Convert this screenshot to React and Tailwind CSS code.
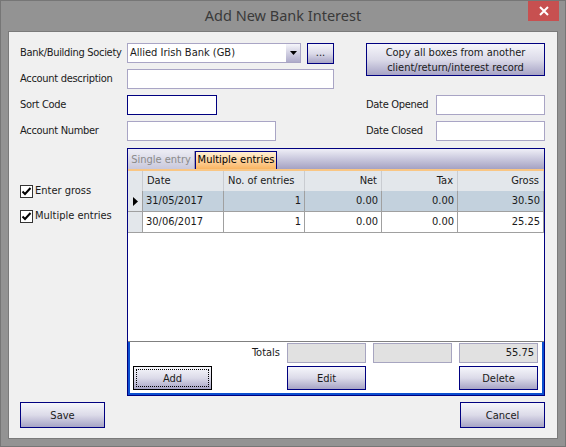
import React from 'react';

const font = "font-['DejaVu_Sans_Condensed','Liberation_Sans',sans-serif]";
const lbl = 'text-[11px] whitespace-nowrap tracking-[-0.3px]';

const Btn = ({ children, focus, className = '' }) => (
    <button
        className={`relative flex items-center justify-center border bg-linear-to-b from-[#f6f6fb] via-[#dcdbe9] to-[#a7a4c5] text-[11px] leading-none text-[#1a1a1a] ${focus ? 'border-black' : 'border-[#000080]'} ${className}`}
    >
        {focus ? <span className="absolute inset-[2px] border border-dotted border-black" /> : null}
        <span className="relative">{children}</span>
    </button>
);

const Field = ({ className = '', dark, children }) => (
    <div
        className={`h-[20px] flex items-center px-[3px] bg-white border text-[11px] ${dark ? 'border-[#000080]' : 'border-[#a9a5c5]'} ${className}`}
    >
        {children}
    </div>
);

const Check = ({ label }) => (
    <div className="flex items-center gap-[2px] h-[14px]">
        <svg width="13" height="13" viewBox="0 0 13 13" className="shrink-0">
            <rect x="0.5" y="0.5" width="12" height="12" fill="#fff" stroke="#333" />
            <path d="M2.5 6.5 L5 9 L10.5 3" fill="none" stroke="#000" strokeWidth="2" />
        </svg>
        <span className="text-[11px] text-[#1a1a1a] whitespace-nowrap">{label}</span>
    </div>
);

const cols = [
    { key: 'date', label: 'Date', w: 'w-[81px]', align: 'left' },
    { key: 'n', label: 'No. of entries', w: 'w-[81px]', align: 'left', cellAlign: 'right' },
    { key: 'net', label: 'Net', w: 'w-[77px]', align: 'right' },
    { key: 'tax', label: 'Tax', w: 'w-[76px]', align: 'right' },
    { key: 'gross', label: 'Gross', w: 'w-[86px]', align: 'right' },
];

const rows = [
    { id: 1, date: '31/05/2017', n: '1', net: '0.00', tax: '0.00', gross: '30.50', selected: true },
    { id: 2, date: '30/06/2017', n: '1', net: '0.00', tax: '0.00', gross: '25.25' },
];

export default function App() {
    return (
        <div className={`relative w-[566px] h-[447px] bg-[#939393] border border-[#767676] flex flex-col ${font}`}>
            {/* title bar */}
            <div className="h-[30px] shrink-0 flex items-center justify-center">
                <span className="text-[14.5px] text-[#3a3a3a] font-['Noto_Sans','Open_Sans',sans-serif] -mt-[1px]">Add New Bank Interest</span>
            </div>
            <div className="absolute right-[6px] top-0 w-[31px] h-[20px] bg-[#c75050] flex items-center justify-center">
                <svg width="10" height="10" viewBox="0 0 10 10">
                    <path d="M1 1 L9 9 M9 1 L1 9" stroke="#fff" strokeWidth="2" />
                </svg>
            </div>

            {/* client area */}
            <div className="mx-[7px] h-[408px] bg-[#f0f0f0] border border-[#7a7a7a] pl-[11px] pr-[12px] pt-[11px] flex flex-col text-[#1a1a1a]">
                <div className="flex">
                    <div className="w-[314px] flex flex-col gap-[6px]">
                        <div className="flex items-center h-[20px]">
                            <span className={`w-[107px] ${lbl}`}>Bank/Building Society</span>
                            <div className="w-[174px] h-[20px] flex bg-white border border-[#a9a5c5]">
                                <span className="flex-1 flex items-center px-[2px] text-[11px] whitespace-nowrap">Allied Irish Bank (GB)</span>
                                <div className="w-[14px] flex items-center justify-center bg-linear-to-b from-[#f6f6fb] to-[#aeabca]">
                                    <svg width="7" height="4" viewBox="0 0 7 4">
                                        <path d="M0 0 H7 L3.5 4 Z" fill="#000" />
                                    </svg>
                                </div>
                            </div>
                            <Btn className="ml-[6px] w-[27px] h-[21px] mt-[1px]">
                                <span className="-mt-[2px] block">...</span>
                            </Btn>
                        </div>
                        <div className="flex items-center">
                            <span className={`w-[107px] ${lbl}`}>Account description</span>
                            <Field className="w-[207px]" />
                        </div>
                        <div className="flex items-center">
                            <span className={`w-[107px] ${lbl}`}>Sort Code</span>
                            <Field className="w-[90px]" dark />
                        </div>
                        <div className="flex items-center">
                            <span className={`w-[107px] ${lbl}`}>Account Number</span>
                            <Field className="w-[149px]" />
                        </div>
                    </div>
                    <div className="ml-[32px] w-[179px] flex flex-col">
                        <Btn className="h-[33px] w-full">
                            <span className="block text-center leading-[15px]">
                                Copy all boxes from another
                                <br />
                                client/return/interest record
                            </span>
                        </Btn>
                        <div className="mt-[19px] flex items-center">
                            <span className={`w-[70px] ${lbl}`}>Date Opened</span>
                            <Field className="w-[109px]" />
                        </div>
                        <div className="mt-[6px] flex items-center">
                            <span className={`w-[70px] ${lbl}`}>Date Closed</span>
                            <Field className="w-[109px]" />
                        </div>
                    </div>
                </div>

                <div className="mt-[7px] flex">
                    <div className="w-[107px] pt-[36px] flex flex-col gap-[11px]">
                        <Check label="Enter gross" />
                        <Check label="Multiple entries" />
                    </div>

                    {/* tab panel */}
                    <div className="w-[418px] h-[248px] border border-[#000080] flex flex-col bg-white">
                        <div className="h-[20px] pt-[2px] flex items-end bg-linear-to-b from-[#efeff7] to-[#a5a2c3]">
                            <div className="h-[18px] w-[67px] flex items-center justify-center text-[11px] text-[#8a8a8a] bg-linear-to-b from-[#ebebf3] to-[#c9c8dc] border-r border-[#9c9abb]">
                                Single entry
                            </div>
                            <div className="h-[18px] w-[82px] flex items-center justify-center text-[11px] text-black bg-linear-to-b from-[#fff0d4] to-[#f9b562] border-x border-t border-[#000080]">
                                Multiple entries
                            </div>
                        </div>
                        <div className="h-[2px] bg-[#f9c684]" />

                        {/* grid */}
                        <div className="h-[170px] flex flex-col text-[11px]">
                            <div className="h-[20px] flex bg-[#e3e7eb]">
                                <div className="w-[15px] border-r border-[#c9ccd1]" />
                                {cols.map((c) => (
                                    <div
                                        key={c.key}
                                        className={`${c.w} flex items-center px-[4px] border-r border-[#c9ccd1] ${c.align === 'right' ? 'justify-end' : 'justify-start'}`}
                                    >
                                        {c.label}
                                    </div>
                                ))}
                            </div>
                            {rows.map((r) => (
                                <div key={r.id} className={`h-[21px] flex border-b border-[#a0a0a0] ${r.selected ? 'bg-[#c3d1dd]' : 'bg-white'}`}>
                                    <div className="w-[15px] flex items-center justify-center bg-[#e3e7eb] border-r border-[#a0a0a0]">
                                        {r.selected ? (
                                            <svg width="5" height="9" viewBox="0 0 5 9">
                                                <path d="M0 0 L5 4.5 L0 9 Z" fill="#000" />
                                            </svg>
                                        ) : null}
                                    </div>
                                    {cols.map((c) => (
                                        <div
                                            key={c.key}
                                            className={`${c.w} flex items-center px-[3px] border-r border-[#a0a0a0] ${(c.cellAlign || c.align) === 'right' ? 'justify-end' : 'justify-start'}`}
                                        >
                                            {r[c.key]}
                                        </div>
                                    ))}
                                </div>
                            ))}
                        </div>
                        <div className="h-[1px] bg-[#808080]" />

                        {/* lower panel */}
                        <div className="flex-1 border-x-2 border-b-2 border-[#0b4fd0] pl-[3px] pt-[1px] grid grid-cols-[147px_79px_79px_79px] grid-rows-[20px_24px] gap-x-[7px] gap-y-[3px] text-[11px]">
                            <div className="flex items-center justify-end">Totals</div>
                            <div className="bg-[#e1e1e1] border border-[#a7a5c0]" />
                            <div className="bg-[#e1e1e1] border border-[#a7a5c0]" />
                            <div className="bg-[#e1e1e1] border border-[#a7a5c0] flex items-center justify-end px-[3px]">55.75</div>
                            <div>
                                <Btn focus className="w-[79px] h-full">Add</Btn>
                            </div>
                            <Btn>Edit</Btn>
                            <div />
                            <Btn>Delete</Btn>
                        </div>
                    </div>
                </div>

                <div className="mt-[6px] flex justify-between">
                    <Btn className="w-[85px] h-[26px]">Save</Btn>
                    <Btn className="w-[85px] h-[26px]">Cancel</Btn>
                </div>
            </div>
        </div>
    );
}
